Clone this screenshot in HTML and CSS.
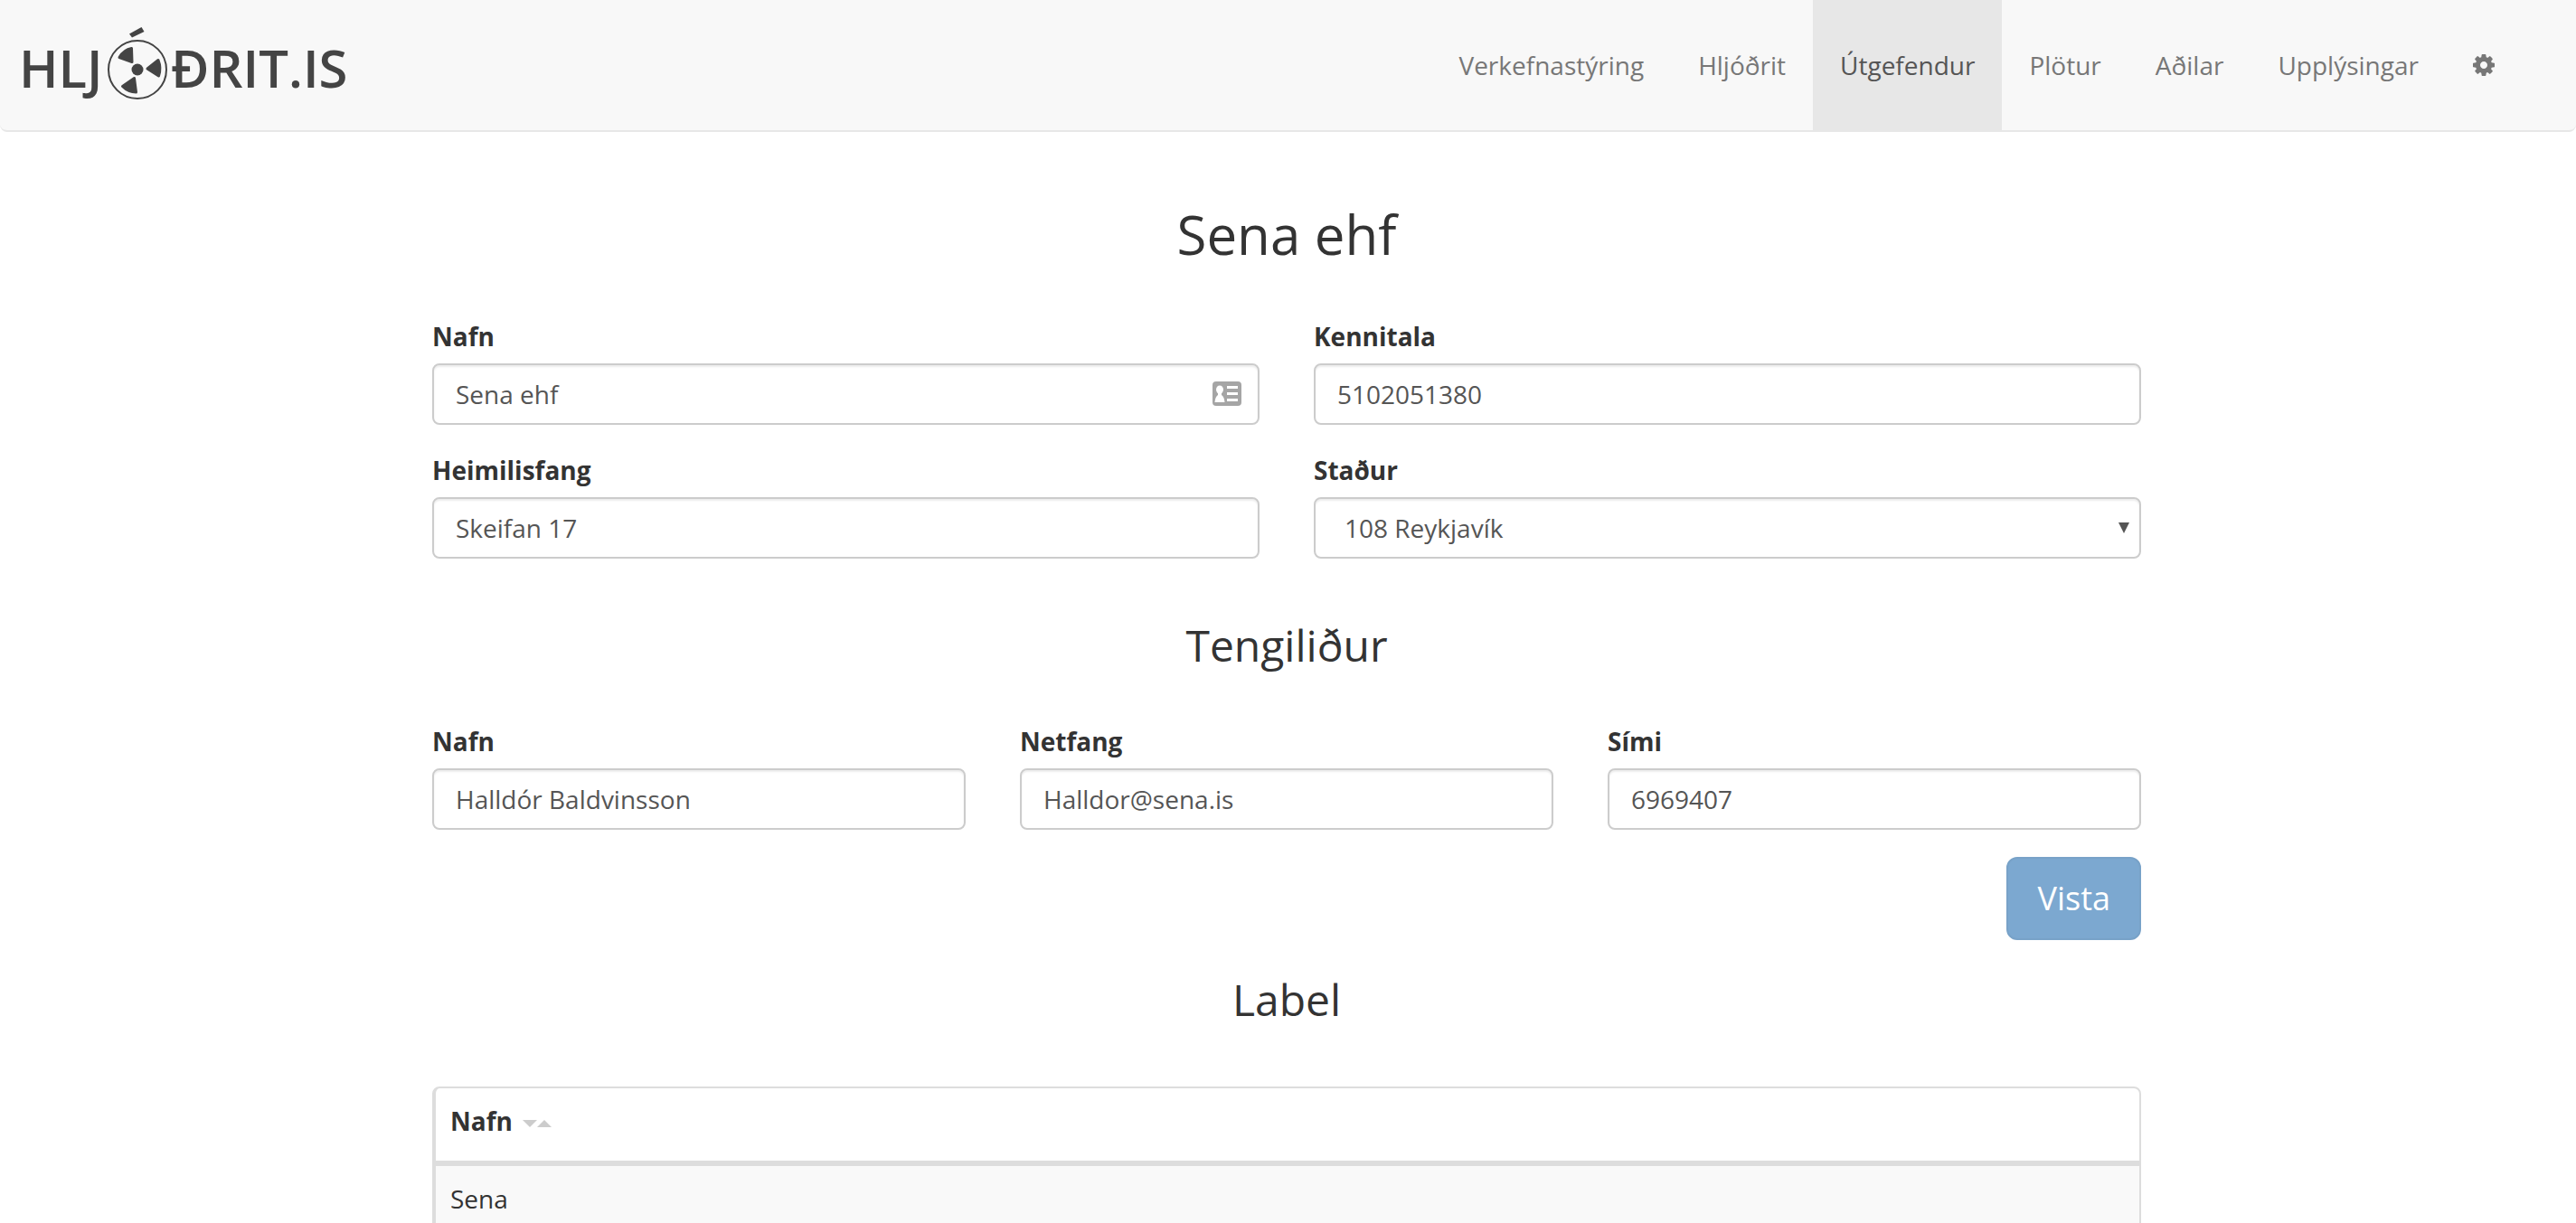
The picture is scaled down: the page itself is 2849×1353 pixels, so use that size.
FILE: index.html
```html
<!DOCTYPE html>
<html lang="is">
<head>
<meta charset="utf-8">
<title>Sena ehf – Hljóðrit.is</title>
<link rel="stylesheet" href="styles.css">
</head>
<body>
<header class="navbar">
  <a class="brand" href="#" aria-label="Hljóðrit.is">
    <svg class="logo" viewBox="-7 0 380 86" aria-hidden="true">
      <text class="logo-text" x="-6" y="67">HLJ</text>
      <text class="logo-text" x="162" y="67">ÐRIT.IS</text>
      <circle cx="125" cy="47" r="32" fill="none" stroke="#444" stroke-width="2"/>
      <circle cx="125" cy="47" r="6.5"/>
      <g stroke="#444" stroke-width="3" stroke-linejoin="round">
        <path d="M105 33.500Q110 25 118.500 23.500L119 38.500Z"/>
        <path d="M136 46L148 36.500Q151.500 45 148.500 54Z"/>
        <path d="M121.500 56.500L108.500 65.500Q115 72 123.500 72Z"/>
      </g>
      <path d="M116 7.500L129.500 0L132.500 5L119 11.500Z"/>
    </svg>
  </a>
  <nav class="nav">
    <a href="#">Verkefnastýring</a>
    <a href="#">Hljóðrit</a>
    <a class="active" href="#">Útgefendur</a>
    <a href="#">Plötur</a>
    <a href="#">Aðilar</a>
    <a href="#">Upplýsingar</a>
    <a href="#" aria-label="Stillingar">
      <svg class="gear" viewBox="0 0 1536 1536" aria-hidden="true"><path d="M1024 768q0-106-75-181t-181-75-181 75-75 181 75 181 181 75 181-75 75-181zm512-109v222q0 12-8 23t-20 13l-185 28q-19 54-39 91 35 50 107 138 10 12 10 25t-9 23q-27 37-99 108t-94 71q-12 0-26-9l-138-108q-44 23-91 38-16 136-29 186-7 28-36 28H657q-14 0-24.500-8.500T621 1506l-28-184q-49-16-90-37l-141 107q-10 9-25 9-14 0-25-11-126-114-165-168-7-10-7-23 0-12 8-23 15-21 51-66.500t54-70.500q-27-50-41-99L29 913q-13-2-21-12.500T0 877V655q0-12 8-23t19-13l186-28q14-46 39-92-40-57-107-138-10-12-10-24 0-10 9-23 26-36 98.500-107.500T337 135q13 0 26 10l138 107q44-23 91-38 16-136 29-186 7-28 36-28h222q14 0 24.500 8.500T915 30l28 184q49 16 90 37l142-107q9-9 24-9 13 0 25 10 129 119 165 170 7 8 7 22 0 12-8 23-15 21-51 66.500t-54 70.500q26 50 41 98l183 28q13 2 21 12.500t8 23.500z"/></svg>
    </a>
  </nav>
</header>

<main class="page">
  <div class="content">
    <h1>Sena ehf</h1>
    <form class="publisher-form">
      <div class="fields two">
        <div class="field">
          <label for="name">Nafn</label>
          <div class="with-icon">
            <input id="name" type="text" value="Sena ehf">
            <svg class="card-icon" viewBox="0 0 32 28" aria-hidden="true">
              <rect width="32" height="27" rx="4" fill="#a5a5a5"/>
              <g fill="#fff">
                <ellipse cx="8" cy="9" rx="4" ry="4.500"/>
                <path d="M6 12h4v3q3 2 3.500 8h-11Q3 17 6 15z"/>
                <path d="M16 5h12v3H16zM16 12h12v3H16zM16 19h12v3H16z"/>
              </g>
            </svg>
          </div>
        </div>
        <div class="field">
          <label for="kennitala">Kennitala</label>
          <input id="kennitala" type="text" value="5102051380">
        </div>
        <div class="field">
          <label for="address">Heimilisfang</label>
          <input id="address" type="text" value="Skeifan 17">
        </div>
        <div class="field">
          <label for="place">Staður</label>
          <div class="select-wrap">
            <select id="place"><option>108 Reykjavík</option></select>
          </div>
        </div>
      </div>

      <h2>Tengiliður</h2>
      <div class="fields three">
        <div class="field">
          <label for="contact-name">Nafn</label>
          <input id="contact-name" type="text" value="Halldór Baldvinsson">
        </div>
        <div class="field">
          <label for="contact-email">Netfang</label>
          <input id="contact-email" type="email" value="Halldor@sena.is">
        </div>
        <div class="field">
          <label for="contact-phone">Sími</label>
          <input id="contact-phone" type="tel" value="6969407">
        </div>
      </div>
      <div class="actions"><button type="submit">Vista</button></div>
    </form>

    <h2>Label</h2>
    <table class="labels">
      <thead>
        <tr><th scope="col">Nafn<svg class="sort" viewBox="0 0 32 8" aria-hidden="true"><path d="M0 0H16L8 8ZM16 8H32L24 0Z"/></svg></th></tr>
      </thead>
      <tbody>
        <tr><td>Sena</td></tr>
      </tbody>
    </table>
  </div>
</main>
</body>
</html>
```

FILE: styles.css
```css
* { box-sizing: border-box; }

body {
  margin: 0;
  background: #fff;
  color: #333;
  font-family: "Open Sans", sans-serif;
  font-size: 28px;
  line-height: 40px;
}

.navbar {
  display: flex;
  justify-content: space-between;
  background: #f8f8f8;
  border-bottom: 2px solid #e7e7e7;
  border-radius: 0 0 8px 8px;
}

.brand { padding: 30px 0 28px 20px; }

.logo {
  display: block;
  width: 380px;
  height: 86px;
  fill: #444;
}

.logo-text {
  font-size: 58px;
  font-weight: 600;
}

.nav {
  display: flex;
  padding-right: 60px;
}

.nav a {
  display: flex;
  align-items: center;
  padding: 0 30px;
  color: #777;
  text-decoration: none;
}

.nav .active {
  background: #e7e7e7;
  color: #555;
}

.gear {
  width: 24px;
  height: 24px;
  fill: #777;
}

.page { padding: 0 33px 0 30px; }

.content {
  max-width: 1890px;
  margin: 0 auto;
}

h1, h2 {
  font-weight: 400;
  text-align: center;
}

h1 {
  margin: 80px 0 60px;
  font-size: 60px;
  line-height: 66px;
}

h2 {
  margin: 70px 0 60px;
  font-size: 48px;
  line-height: 52px;
}

.fields {
  display: grid;
  gap: 30px 60px;
}

.two { grid-template-columns: repeat(2, 1fr); }
.three { grid-template-columns: repeat(3, 1fr); }

label {
  display: block;
  margin-bottom: 10px;
  font-weight: 700;
}

input, select {
  display: block;
  width: 100%;
  height: 68px;
  padding: 12px 24px;
  border: 2px solid #ccc;
  border-radius: 8px;
  background: #fff;
  box-shadow: inset 0 2px 2px rgba(0, 0, 0, 0.075);
  color: #555;
  font: inherit;
}

select {
  appearance: none;
  padding: 12px 32px;
}

.with-icon, .select-wrap { position: relative; }

.card-icon {
  position: absolute;
  top: 20px;
  right: 20px;
  width: 32px;
  height: 28px;
}

.select-wrap::after {
  content: "";
  position: absolute;
  top: 28px;
  right: 13px;
  border: 6px solid transparent;
  border-top: 12px solid #555;
  border-bottom: 0;
}

.actions {
  display: flex;
  justify-content: flex-end;
  margin-top: 30px;
}

button {
  padding: 20px 32px;
  border: 2px solid #78a2c8;
  border-radius: 12px;
  background: #7ca8d0;
  color: #fff;
  font: inherit;
  font-size: 36px;
  line-height: 48px;
}

.publisher-form + h2 { margin: 40px 0 70px; }

.labels {
  width: 100%;
  border: 2px solid #ddd;
  border-left-width: 4px;
  border-radius: 8px;
  border-spacing: 0;
}

th, td {
  padding: 16px;
  text-align: left;
}

th {
  padding-bottom: 24px;
  border-bottom: 6px solid #ddd;
}

td { background: #f9f9f9; }

.sort {
  width: 32px;
  height: 8px;
  margin-left: 11px;
  vertical-align: 4px;
  fill: #ccc;
}
```
